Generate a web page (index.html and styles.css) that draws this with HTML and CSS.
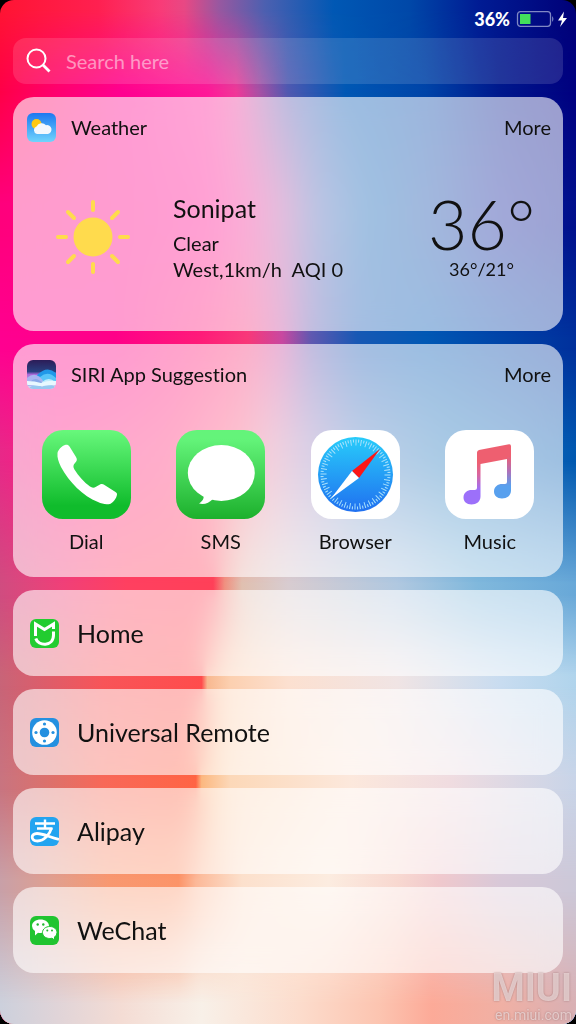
FILE: index.html
```html
<!DOCTYPE html>
<html lang="en">
<head>
  <meta charset="UTF-8" />
  <meta name="viewport" content="width=device-width, initial-scale=1.0" />
  <title>Widgets</title>
  <link rel="stylesheet" href="styles.css">
</head>

<body>
  <div class="screen">
    <!-- wallpaper: stacked colour bands, each fading into the next -->
    <div class="wallpaper" aria-hidden="true">
      <div class="band b1"></div>
      <div class="band b2"></div>
      <div class="band b3"></div>
      <div class="band b4"></div>
      <div class="band b5"></div>
      <div class="band b6"></div>
      <div class="band b7"></div>
      <div class="band b8"></div>
      <div class="band b9"></div>
      <div class="band b10"></div>
    </div>

    <header class="status">
      <span>36%</span>
      <svg width="51" height="18" viewBox="0 0 51 18">
        <rect x="1.5" y="1.7" width="33" height="14.6" rx="3" fill="none" stroke="#8088c4" stroke-width="1.3"/>
        <rect x="4" y="4" width="10.5" height="10" fill="#43e05c"/>
        <path d="M36 6q3 3 0 6z" fill="#6c78bc"/>
        <path d="M48 1.500 42 10.500h4L44 17l7-9h-4z" fill="#fff"/>
      </svg>
    </header>

    <main>
      <label class="search">
        <svg width="26" height="26" viewBox="0 0 26 26" fill="none" stroke="#fff" stroke-width="2">
          <circle cx="10.500" cy="10.500" r="9"/>
          <path d="M17 17l6.500 6.500" stroke-width="2.800"/>
        </svg>
        <input type="text" placeholder="Search here" aria-label="Search here" />
      </label>

      <section class="card">
        <div class="card-head">
          <svg class="small-icon" viewBox="0 0 29 29">
            <defs>
              <linearGradient id="sky" x2="0" y2="1"><stop offset="0" stop-color="#1c78f0"/><stop offset="1" stop-color="#70d4fc"/></linearGradient>
            </defs>
            <rect width="29" height="29" rx="6" fill="url(#sky)"/>
            <circle cx="9.500" cy="11" r="5" fill="#ffc912"/>
            <path d="M10 21a4 4 0 0 1-.5-7.600A5.800 5.800 0 0 1 19 12.200a4.500 4.500 0 0 1 2 8.800z" fill="#f4f8fd"/>
          </svg>
          <h2>Weather</h2>
          <a href="#">More</a>
        </div>
        <div class="weather">
          <svg class="sun" viewBox="0 0 74 74">
            <circle cx="37" cy="37" r="19.500" fill="#ffdb4d"/>
            <path d="M37 2v8M37 64v8M2 37h8M64 37h8M12 12l6 6M56 56l6 6M62 12l-6 6M18 56l-6 6" stroke="#ffdb4d" stroke-width="4" stroke-linecap="round"/>
          </svg>
          <div class="place">
            <h3>Sonipat</h3>
            <p>Clear</p>
            <p>West,1km/h&nbsp; AQI 0</p>
          </div>
          <div class="temp">
            <strong>36°</strong>
            <p>36°/21°</p>
          </div>
        </div>
      </section>

      <section class="card">
        <div class="card-head">
          <svg class="small-icon" viewBox="0 0 29 29">
            <defs>
              <linearGradient id="night" x2="0" y2="1"><stop offset="0" stop-color="#2c1c58"/><stop offset=".4" stop-color="#284080"/><stop offset=".5" stop-color="#a868d8"/><stop offset="1" stop-color="#d8ecf8"/></linearGradient>
              <clipPath id="tile"><rect width="29" height="29" rx="6"/></clipPath>
            </defs>
            <g clip-path="url(#tile)">
              <rect width="29" height="29" fill="url(#night)"/>
              <path d="M10 15Q20 5 29 13v9H10z" fill="#2098e8"/>
              <path d="M13 17q8-7 16 1v5H13z" fill="#58c4f8"/>
              <path d="M0 18q9-8 17 4l-6 4H0z" fill="#a8b4f0"/>
              <path d="M3 22q6-7 13 2z" fill="#88a8e8"/>
              <path d="M15 22q7-6 13 0-6 5-13 1z" fill="#c0ecfc"/>
              <path d="M1 29q8-8 14-2 7-6 14 1v1z" fill="#98c8f0"/>
              <path d="M0 21q8 0 14 2 8-3 15-2v4q-8 0-13 1h-4Q7 25 0 25z" fill="#e8f8ff"/>
            </g>
          </svg>
          <h2>SIRI App Suggestion</h2>
          <a href="#">More</a>
        </div>
        <nav class="apps">
          <a href="#">
            <svg viewBox="0 0 89 89">
              <defs><linearGradient id="green" x2="0" y2="1"><stop offset="0" stop-color="#68f87c"/><stop offset=".85" stop-color="#10bc2c"/></linearGradient></defs>
              <rect width="89" height="89" rx="21" fill="url(#green)"/>
              <path d="M15.500 23c.5-3 4-7 7.500-8 2-.6 3.500 0 4.500 1.500L34 27c1.500 2.500 1 4-1 6-2 1.800-2 4-.7 6.200C36.500 46 42 52 48 56.500c2 1.500 4 1.500 6 .2l4-2.200c1.500-.8 3-.6 4.500.4l11 7c2 1.200 1.800 2.500 1 4.500-1 3-4 6.500-6.500 7.500-4 1-8 0-12-1.800C41 66 27 52 19 37c-2.500-5-4-9.500-3.500-14z" fill="#fff"/>
            </svg>
            <span>Dial</span>
          </a>
          <a href="#">
            <svg viewBox="0 0 89 89">
              <defs><linearGradient id="lime" x2="0" y2="1"><stop offset=".1" stop-color="#64f47a"/><stop offset="1" stop-color="#1cb02c"/></linearGradient></defs>
              <rect width="89" height="89" rx="21" fill="url(#lime)"/>
              <ellipse cx="45.300" cy="43" rx="33.500" ry="28" fill="#fff"/>
              <path d="M27 65c2 3-1 6.500-4 8.500 5 1.500 10-.5 14-4.500z" fill="#fff"/>
            </svg>
            <span>SMS</span>
          </a>
          <a href="#">
            <svg viewBox="0 0 89 89">
              <defs><linearGradient id="dial" x2="0" y2="1"><stop offset="0" stop-color="#28ccfa"/><stop offset="1" stop-color="#2070f0"/></linearGradient></defs>
              <rect width="89" height="89" rx="21" fill="#fff"/>
              <circle cx="44.500" cy="44.500" r="37.500" fill="url(#dial)"/>
              <circle cx="44.500" cy="44.500" r="32" fill="none" stroke="#a8e0fc" stroke-width="6" stroke-dasharray="1 4" pathLength="200"/>
              <circle cx="44.500" cy="44.500" r="33.500" fill="none" stroke="#a8e0fc" stroke-width="3" stroke-dasharray="1 4" stroke-dashoffset="2.500" pathLength="200"/>
              <path d="M69 19 41 41l7 7z" fill="#fb1616"/>
              <path d="M20 68.500 41 41l7 7z" fill="#fff"/>
            </svg>
            <span>Browser</span>
          </a>
          <a href="#">
            <svg viewBox="0 0 89 89">
              <defs>
                <linearGradient id="beam" gradientUnits="userSpaceOnUse" x1="0" y1="24" x2="0" y2="66"><stop offset=".2" stop-color="#ee5f70"/><stop offset=".5" stop-color="#d866a0"/><stop offset=".85" stop-color="#9c70fa"/></linearGradient>
                <linearGradient id="stem" gradientUnits="userSpaceOnUse" x1="0" y1="26" x2="0" y2="56"><stop offset="0" stop-color="#ee5f70"/><stop offset=".5" stop-color="#b070b8"/><stop offset="1" stop-color="#58a0ee"/></linearGradient>
              </defs>
              <rect width="89" height="89" rx="21" fill="#fff"/>
              <path d="M34 20 64 14.300q2-.3 2 2v12L35.500 34v32.500c0 5-4 8-9 8s-8-3-8-7c0-5 4-7.500 8-7.500h3q2.500 0 2.500-2.500V22.500q0-2 2-2.500z" fill="url(#beam)"/>
              <path d="M62 22h4v38.500c0 5-4 8-9 8s-8-3-8-7c0-5 4-7.500 8-7.500h3q2 0 2-2z" fill="url(#stem)"/>
            </svg>
            <span>Music</span>
          </a>
        </nav>
      </section>

      <a class="card row" href="#">
        <svg class="small-icon" viewBox="0 0 29 29">
          <rect width="29" height="29" rx="6" fill="#22cc30"/>
          <path d="M5.500 17V5l9 5.500 9-5.500v5" fill="none" stroke="#fff" stroke-width="3"/>
          <path d="M5.800 19.500C8 27.500 23.500 28 23.500 16v-3.500" fill="none" stroke="#fff" stroke-width="3"/>
        </svg>
        <span>Home</span>
      </a>

      <a class="card row" href="#">
        <svg class="small-icon" viewBox="0 0 29 29">
          <rect width="29" height="29" rx="6" fill="#2490e0"/>
          <circle cx="14.500" cy="14.500" r="12.300" fill="#fff"/>
          <g fill="#2490e0">
            <circle cx="14.500" cy="14.500" r="4.800"/>
            <circle cx="14.500" cy="6" r="1.600"/>
            <circle cx="14.500" cy="23" r="1.600"/>
            <circle cx="6" cy="14.500" r="1.600"/>
            <circle cx="23" cy="14.500" r="1.600"/>
          </g>
        </svg>
        <span>Universal Remote</span>
      </a>

      <a class="card row" href="#">
        <svg class="small-icon" viewBox="0 0 29 29">
          <rect width="29" height="29" rx="6" fill="#22a4f0"/>
          <g fill="none" stroke="#fff" stroke-width="2.400">
            <path d="M5 6.500h20M7 11.500h15.500M15 2.500v9"/>
            <path d="M21.500 11C20 17 14 24 7.500 24c-7 0-7-7.500-.5-7.500 6 0 11 3 22 6" stroke-width="2.800"/>
          </g>
        </svg>
        <span>Alipay</span>
      </a>

      <a class="card row" href="#">
        <svg class="small-icon" viewBox="0 0 29 29">
          <rect width="29" height="29" rx="6" fill="#20c430"/>
          <path d="M5 19.500V15Q2 13 2 10c0-4 4-6.500 8.500-6.500S19 6 19 10s-4 7-8.500 7q-1.500 0-2.500-.3z" fill="#fff"/>
          <path d="M24.500 24v-3q2.500-1.500 2.500-4.500c0-3.500-3.200-6-7.200-6s-7.300 2.500-7.300 6 3.200 6 7.300 6q1.200 0 2.200-.3z" fill="#fff" stroke="#20c430"/>
          <g fill="#20b830">
            <circle cx="7.700" cy="8.500" r="1.200"/>
            <circle cx="13.300" cy="8.500" r="1.200"/>
            <circle cx="17.300" cy="14.500" r="1"/>
            <circle cx="22" cy="14.500" r="1"/>
          </g>
        </svg>
        <span>WeChat</span>
      </a>
    </main>

    <div class="watermark">
      <b>MIUI</b>
      <small>en.miui.com</small>
    </div>
  </div>
</body>
</html>
```
FILE: styles.css
```css
:root {
  --text: #111;
  --card: rgba(255, 255, 255, 0.61);
  --gap: 13px;
}

* {
  box-sizing: border-box;
}

body {
  margin: 0;
  font-family: Lato, "Open Sans", sans-serif;
  font-size: 20px;
  line-height: 26px;
  font-variant-ligatures: none;
  color: var(--text);
  background: #000;
}

h2,
h3,
p {
  margin: 0;
  font-weight: 400;
  font-size: 20px;
}

a {
  color: inherit;
  text-decoration: none;
}

svg {
  display: block;
  flex: none;
}

.screen {
  position: relative;
  min-height: 100vh;
  padding: 0 var(--gap) var(--gap);
  border-radius: 14px;
  overflow: hidden;
}

/* wallpaper */
.wallpaper,
.band {
  position: absolute;
  inset: 0;
}

.b1 {
  background: linear-gradient(90deg, #ff1433, #ff2050 17%, #f83c78 28%, #e84884 32%, #9858a0 38%, #4c60b0 46%, #0058b4 58%, #0048a8 71%, #001c94 83%, #000078);
}

.b2 {
  background: linear-gradient(90deg, #ff0048, #ff0070 10%, #ff0090 21%, #ff1898 36%, #f03898 41%, #a850a4 45%, #5058b0 50%, #0058b4 60%, #0044a8 74%, #00188c 87%, #000080);
  mask-image: linear-gradient(transparent 1%, #000 9%);
}

.b3 {
  background: linear-gradient(90deg, #ff007c, #ff0088 20%, #ff0c90 36%, #f43098 43%, #b858a8 49%, #5068b8 55%, #0860b4 64%, #1048a8 75%, #10209c 87%, #00108c);
  mask-image: linear-gradient(transparent 9%, #000 20%);
}

.b4 {
  background: linear-gradient(90deg, #ff0090, #ff0088 20%, #ff1c78 35%, #f83878 43%, #c848a0 49%, #6058b0 54%, #1858b4 62%, #0058b4 74%, #0044a8 87%, #00309c);
  mask-image: linear-gradient(transparent 22%, #000 33%);
}

.b5 {
  background: linear-gradient(90deg, #e82888, #ff1884 10%, #ff3078 30%, #fa6080 41%, #e088a8 47%, #a888c0 53%, #5884c4 63%, #2078bc 78%, #1468b8 90%, #0058b0);
  mask-image: linear-gradient(transparent 34%, #000 44%);
}

.b6 {
  background: linear-gradient(90deg, #d04c80, #f04078 11%, #ff4060 22%, #ff4058 37%, #f09080 39%, #e0c0b0 42%, #d8ccd0 50%, #b0c8e0 69%, #80b8dc 83%, #68a8d8);
  mask-image: linear-gradient(transparent 45%, #000 57%);
}

.b7 {
  background: linear-gradient(90deg, #c86478, #e05c68 9%, #f85458 18%, #ff4c4c 35%, #f8b890 36%, #fcd0b0 40%, #fce0d0 50%, #f0e4e4 69%, #c8dcf0 87%, #b0d4ec);
  mask-image: linear-gradient(transparent 58%, #000 66%);
}

.b8 {
  background: linear-gradient(90deg, #c87480, #e07068 10%, #f86858 18%, #ff6444 34%, #fcb880 35%, #fcd8b8 40%, #fce8dc 61%, #f0dce0 78%, #c8d4e8);
  mask-image: linear-gradient(transparent 67%, #000 76%);
}

.b9 {
  background: linear-gradient(90deg, #c8a0a8, #e0a090 9%, #f89870 19%, #fc9468 31%, #fcb898 34%, #fce0cc 42%, #fcece0 57%, #f8d8d0 69%, #f0c8cc 76%, #d8c8d8 87%, #ccc8d8);
  mask-image: linear-gradient(transparent 77%, #000 86%);
}

.b10 {
  background: linear-gradient(90deg, #ccd0dc, #e0d4d8 10%, #f4dcd4 21%, #f8f0e8 35%, #fcdccc 52%, #fcc4b0 66%, #fcaa98 75%, #f0b0a4 87%, #d8b0b4);
  mask-image: linear-gradient(transparent 87%, #000 98%);
}

/* status bar */
.status {
  position: relative;
  display: flex;
  justify-content: flex-end;
  align-items: center;
  gap: 6px;
  height: 38px;
  margin-right: -4px;
  color: #fff;
  font-size: 18px;
  font-weight: 900;
}

main {
  position: relative;
  display: flex;
  flex-direction: column;
  gap: var(--gap);
}

.search {
  display: flex;
  align-items: center;
  gap: 14px;
  height: 46px;
  padding: 0 13px;
  border-radius: 13px;
  background: rgba(255, 255, 255, 0.13);
}

.search input {
  flex: 1;
  min-width: 0;
  padding: 0;
  border: 0;
  outline: 0;
  background: none;
  color: #fff;
  font: inherit;
}

.search input::placeholder {
  color: rgba(255, 255, 255, 0.5);
  opacity: 1;
}

.card {
  border-radius: 21px;
  background: var(--card);
  backdrop-filter: blur(12px);
}

.card-head {
  display: flex;
  align-items: center;
  gap: 15px;
  height: 60px;
  padding: 0 12px 0 14px;
}

.card-head h2 {
  flex: 1;
}

.small-icon {
  width: 29px;
  height: 29px;
}

/* weather */
.weather {
  display: flex;
  align-items: center;
  padding: 35px 28px 49px 43px;
}

.sun {
  width: 74px;
  height: 74px;
  margin-right: 43px;
}

.place {
  flex: 1;
}

.place h3 {
  margin-bottom: 6px;
  font-size: 25px;
  line-height: 32px;
}

.temp {
  text-align: center;
}

.temp strong {
  display: block;
  font-size: 68px;
  font-weight: 300;
  line-height: 64px;
}

.temp p {
  font-size: 18px;
}

/* suggested apps */
.apps {
  display: grid;
  grid-template-columns: repeat(4, 1fr);
  padding: 26px 6px 23px;
}

.apps a {
  display: flex;
  flex-direction: column;
  align-items: center;
  gap: 9px;
}

.apps svg {
  width: 89px;
  height: 89px;
}

.row {
  display: flex;
  align-items: center;
  gap: 18px;
  height: 86px;
  padding: 0 17px;
  font-size: 25px;
}

.watermark {
  position: absolute;
  right: 4px;
  bottom: 2px;
  display: flex;
  flex-direction: column;
  align-items: flex-end;
  color: rgba(240, 222, 222, 0.75);
  text-shadow: 0 0 2px rgba(120, 80, 80, 0.6);
  font-family: Roboto, "Liberation Sans", sans-serif;
}

.watermark b {
  font-size: 38px;
  line-height: 40px;
}

.watermark small {
  font-size: 14px;
  line-height: 14px;
}
```
